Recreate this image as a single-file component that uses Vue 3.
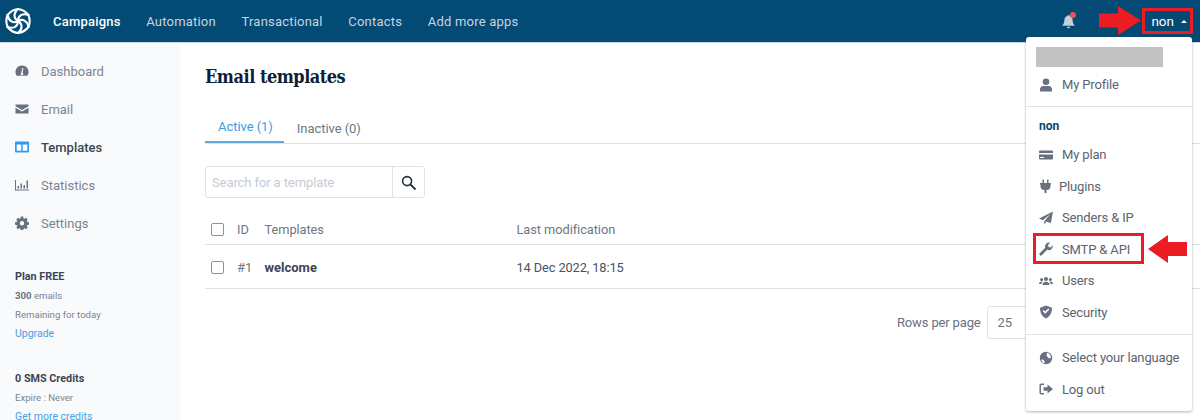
<script setup>
const nav = ['Campaigns', 'Automation', 'Transactional', 'Contacts', 'Add more apps']
const side = [
  { label: 'Dashboard', icon: 'dash' },
  { label: 'Email', icon: 'mail' },
  { label: 'Templates', icon: 'tpl', active: true },
  { label: 'Statistics', icon: 'stat' },
  { label: 'Settings', icon: 'gear' }
]
const petals = [0, 60, 120, 180, 240, 300]
</script>

<template>
  <div class="page">
    <header class="top">
      <svg class="logo" viewBox="0 0 26 28" width="26" height="28">
        <g fill="none" stroke="#fff" stroke-width="2.100" stroke-linecap="round" stroke-linejoin="round">
          <g v-for="p in petals" :key="p" :transform="`rotate(${p} 13 14)`">
            <path d="M13 2 Q19.500 2.800 23.400 8" />
            <path d="M13 14 C8.500 11.500 8 6 13 2" />
          </g>
        </g>
      </svg>
      <nav class="menu">
        <a v-for="(n, i) in nav" :key="n" :class="{ on: i === 0 }">{{ n }}</a>
      </nav>
      <div class="right">
        <span class="bell">
          <svg viewBox="0 0 14 16" width="13" height="15"><path fill="#c3d0da" d="M7 1a1.100 1.100 0 0 1 1.100 1.200C10.300 2.700 11.400 4.400 11.400 6.500c0 3.300 1.100 4.400 1.900 5.300.3.400.1.900-.4.900H1.100c-.5 0-.7-.5-.4-.9.800-.9 1.900-2 1.900-5.300C2.600 4.400 3.700 2.700 5.900 2.200A1.100 1.100 0 0 1 7 1Zm-1.700 12.600h3.400a1.700 1.700 0 0 1-3.400 0Z"/></svg>
          <i class="dot"></i>
        </span>
        <span class="user">non <b class="caret"></b></span>
      </div>
    </header>

    <div class="body">
      <aside class="side">
        <div class="links">
          <div v-for="s in side" :key="s.label" class="link" :class="{ act: s.active }">
            <svg class="ic" viewBox="0 0 14 14" width="14" height="14">
              <path v-if="s.icon === 'dash'" fill="#68727f" fill-rule="evenodd" d="M7 1.500a6.500 6.500 0 0 0-5.600 9.800c.2.300.5.400.8.400h9.600c.3 0 .6-.1.800-.4A6.500 6.500 0 0 0 7 1.500ZM6.300 9l1-5h1L7.700 9a1.200 1.200 0 1 1-1.400 0Z"/>
              <path v-else-if="s.icon === 'mail'" fill="#68727f" d="M.5 2.500h13v1.800L7 8 .5 4.300Zm0 3.300L7 9.500l6.500-3.700v5.700H.500Z"/>
              <path v-else-if="s.icon === 'tpl'" fill="#2d9cf0" fill-rule="evenodd" d="M1 1.500h12a1 1 0 0 1 1 1v9a1 1 0 0 1-1 1H1a1 1 0 0 1-1-1v-9a1 1 0 0 1 1-1Zm.7 3v6.300h4.500V4.500Zm6 0v6.300h4.600V4.500Z"/>
              <path v-else-if="s.icon === 'stat'" fill="#68727f" d="M0 2h1v9.500h13v1H0Zm2.500 6h1.500v2.500H2.500Zm3-2.500H7v5H5.500Zm3 1.500H10v3.500H8.500Zm3-4.500h1.500v8h-1.500Z"/>
              <path v-else fill="#68727f" fill-rule="evenodd" d="M5.800.5h2.400l.3 1.700 1 .5 1.500-.9 1.700 1.700-.9 1.500.5 1 1.700.3v2.400l-1.700.3-.5 1 .9 1.500-1.700 1.700-1.500-.9-1 .5-.3 1.700H5.800l-.3-1.700-1-.5-1.500.9-1.700-1.700.9-1.500-.5-1-1.700-.3V6.300l1.700-.3.500-1-.9-1.500L3 1.800l1.500.9 1-.5ZM7 5a2.200 2.200 0 1 0 0 4.400A2.200 2.200 0 0 0 7 5Z"/>
            </svg>
            <span>{{ s.label }}</span>
          </div>
        </div>
        <div class="info first">
          <strong>Plan FREE</strong>
          <p><b>300</b> emails</p>
          <p>Remaining for today</p>
          <a>Upgrade</a>
        </div>
        <div class="info">
          <strong>0 SMS Credits</strong>
          <p>Expire : Never</p>
          <a>Get more credits</a>
        </div>
      </aside>

      <main class="main">
        <h1>Email templates</h1>
        <div class="tabs">
          <span class="tab on">Active (1)</span>
          <span class="tab">Inactive (0)</span>
        </div>
        <div class="search">
          <span class="ph">Search for a template</span>
          <span class="sbtn">
            <svg viewBox="0 0 16 16" width="15" height="15"><circle cx="6.500" cy="6.500" r="4.800" fill="none" stroke="#27303c" stroke-width="1.700"/><path d="M10 10l4.800 4.800" stroke="#27303c" stroke-width="2.200" stroke-linecap="round"/></svg>
          </span>
        </div>
        <div class="row head">
          <i class="box"></i><span class="id">ID</span><span class="name">Templates</span><span>Last modification</span>
        </div>
        <div class="row body-row">
          <i class="box"></i><span class="id">#1</span><span class="name strong">welcome</span><span class="date">14 Dec 2022, 18:15</span>
        </div>
        <div class="pager">
          <span>Rows per page</span>
          <span class="sel">25</span>
        </div>
      </main>
    </div>

    <div class="drop">
      <div class="sec one">
        <div class="grey"></div>
        <div class="item">
          <svg class="mi" viewBox="0 0 14 14" width="14" height="14"><circle cx="7" cy="3.800" r="3.300" fill="#68727f"/><path fill="#68727f" d="M1 13.500v-2.300C1 9.300 2.500 8 4.200 8h5.600c1.700 0 3.200 1.300 3.200 3.200v2.300Z"/></svg>
          My Profile
        </div>
      </div>
      <div class="sec two">
        <div class="acct">non</div>
        <div class="item">
          <svg class="mi" viewBox="0 0 14 14" width="14" height="14"><path fill="#68727f" fill-rule="evenodd" d="M1 2.500h12a1 1 0 0 1 1 1v7a1 1 0 0 1-1 1H1a1 1 0 0 1-1-1v-7a1 1 0 0 1 1-1ZM0 5v1.500h14V5Zm1 4v1h4V9Z"/></svg>
          My plan
        </div>
        <div class="item tight">
          <svg class="mi small" viewBox="0 0 11 14" width="11" height="14"><path fill="#68727f" d="M2.500.5h1.500v3.500H7V.5h1.500v3.500H11v1.500h-.5V7a4 4 0 0 1-4 4v3H4.500v-3a4 4 0 0 1-4-4V5.500H0V4h2.500Z"/></svg>
          Plugins
        </div>
        <div class="item">
          <svg class="mi" viewBox="0 0 14 14" width="14" height="14"><path fill="#68727f" d="M14 .5 11.800 12.300 7.600 10.500 5.300 13.500V10.300L11.500 3 3.800 9.200 0 7.600Z"/></svg>
          Senders &amp; IP
        </div>
        <div class="item">
          <svg class="mi" viewBox="0 0 14 14" width="14" height="14"><path fill="#68727f" d="M13.700 3.300 11.500 5.500 9.500 5 9 3l2.200-2.200a4 4 0 0 0-5 5L.7 11.200a1.500 1.500 0 0 0 2.100 2.100l5.400-5.500a4 4 0 0 0 5.500-4.500Z"/></svg>
          SMTP &amp; API
        </div>
        <div class="item">
          <svg class="mi" viewBox="0 0 14 14" width="14" height="14"><g fill="#68727f"><circle cx="7" cy="5" r="2.100"/><circle cx="2.600" cy="5.600" r="1.500"/><circle cx="11.400" cy="5.600" r="1.500"/><path d="M3.500 11c0-2 1.500-3.200 3.500-3.200s3.500 1.200 3.500 3.200ZM0 10c0-1.600 1-2.500 2.500-2.500.4 0 .7 0 1 .2A4 4 0 0 0 2.400 10Zm14 0c0-1.600-1-2.500-2.500-2.500-.4 0-.7 0-1 .2a4 4 0 0 1 1.100 2.300Z"/></g></svg>
          Users
        </div>
        <div class="item">
          <svg class="mi" viewBox="0 0 14 14" width="14" height="14"><path fill="#68727f" fill-rule="evenodd" d="M7 .5 13 2.800c0 5.500-2.300 9-6 10.700C3.300 11.800 1 8.300 1 2.800Zm3.300 4L9.200 3.400 6.200 6.500 4.800 5.100 3.700 6.200l2.500 2.500Z"/></svg>
          Security
        </div>
      </div>
      <div class="sec three">
        <div class="item">
          <svg class="mi" viewBox="0 0 14 14" width="14" height="14"><circle cx="7" cy="7" r="6.200" fill="#68727f"/><path fill="#fff" d="M8 1.800c2 .5 3.800 2.300 4 4.500L10.500 7.500 9 6.500 7.500 4.500ZM2.500 8.500l2 .3 1.200 2-.7 1.800c-1.500-.5-2.300-2.400-2.500-4.100Z"/></svg>
          Select your language
        </div>
        <div class="item">
          <svg class="mi" viewBox="0 0 14 14" width="14" height="14"><path fill="none" stroke="#68727f" stroke-width="1.500" d="M5 2.300H2.200a1 1 0 0 0-1 1v7.400a1 1 0 0 0 1 1H5"/><path fill="#68727f" d="M8.500 2.500 14 7l-5.500 4.500V8.800H4.500V5.200h4Z"/></svg>
          Log out
        </div>
      </div>
    </div>

    <i class="mark m-user"></i>
    <i class="mark m-smtp"></i>
    <svg class="arrow a-top" viewBox="0 0 42 29" width="42" height="29"><path fill="#ec1c24" d="M0 7.500H19V0L42 14.500 19 29V21.500H0Z"/></svg>
    <svg class="arrow a-side" viewBox="0 0 39 28" width="39" height="28"><path fill="#ec1c24" d="M39 7H20V0L0 14 20 28V21H39Z"/></svg>
  </div>
</template>

<style>
html, body { margin: 0; background: #fff; }
</style>

<style scoped>
.page {
  position: relative;
  width: 1200px;
  height: 420px;
  overflow: hidden;
  font-family: Roboto, "Liberation Sans", sans-serif;
  color: #68727f;
  background: #fff;
}
.top {
  height: 42px;
  background: #034a75;
  border-bottom: 1px solid #c9d6df;
  display: flex;
  align-items: center;
  padding-left: 5px;
}
.logo { flex: none; }
.menu {
  display: flex;
  gap: 25.700px;
  margin-left: 22px;
  font-size: 13px;
  letter-spacing: .2px;
  color: #c5d5e0;
}
.menu .on { color: #fff; font-weight: 500; }
.right {
  margin-left: auto;
  display: flex;
  align-items: center;
  padding-right: 13px;
}
.bell { position: relative; display: flex; margin-right: 76px; }
.dot {
  position: absolute;
  top: -2px;
  right: -1px;
  width: 6px;
  height: 6px;
  border-radius: 50%;
  background: #ef5350;
}
.user {
  display: flex;
  align-items: center;
  gap: 7px;
  color: #fff;
  font-size: 13.500px;
}
.caret {
  width: 0;
  height: 0;
  border: 3px solid transparent;
  border-top: 0;
  border-bottom-color: #fff;
}
.body {
  display: flex;
  height: 377px;
}
.side {
  width: 180px;
  flex: none;
  background: #f9fafc;
  padding: 9px 0 0 15px;
  box-sizing: border-box;
}
.link {
  height: 38px;
  display: flex;
  align-items: center;
  gap: 12px;
  font-size: 13px;
  color: #7b8490;
}
.link .ic { flex: none; }
.link.act { color: #3d4552; font-weight: 500; }
.info { margin-top: 26px; font-size: 9.600px; line-height: 19px; color: #7b8490; }
.info.first { margin-top: 25px; }
.info strong { display: block; font-size: 10.800px; font-weight: 700; color: #3d4552; }
.info p { margin: 0; }
.info p b { font-weight: 700; color: #68727f; }
.info a { display: block; color: #4a9fe0; font-size: 10.500px; }
.main {
  flex: 1;
  padding: 0 0 0 25px;
  min-width: 0;
}
h1 {
  margin: 0;
  padding-top: 22px;
  height: 28px;
  font: 700 18px/24px "DejaVu Serif", serif;
  font-stretch: condensed;
  letter-spacing: -.5px;
  color: #0f1d35;
}
.tabs {
  margin-top: 8px;
  height: 43px;
  box-sizing: border-box;
  border-bottom: 1px solid #dde3ea;
  display: flex;
  align-items: flex-end;
  font-size: 13px;
}
.tab {
  padding: 0 13px;
  line-height: 28px;
  color: #6e7783;
  height: 28px;
  letter-spacing: -.05px;
}
.tab.on {
  color: #3e9ae4;
  padding-right: 11px;
  border-bottom: 2px solid #5eaadf;
}
.search {
  margin-top: 22px;
  width: 220px;
  height: 32px;
  box-sizing: border-box;
  border: 1px solid #dde3ea;
  border-radius: 3px;
  display: flex;
  align-items: center;
  font-size: 13px;
  letter-spacing: -.1px;
  color: #c5ccd6;
}
.ph { flex: 1; padding-left: 6px; }
.sbtn {
  width: 31px;
  height: 30px;
  border-left: 1px solid #dde3ea;
  display: flex;
  align-items: center;
  justify-content: center;
}
.row {
  display: flex;
  align-items: center;
  height: 44px;
  box-sizing: border-box;
  padding-left: 6px;
  border-bottom: 1px solid #dde3ea;
  font-size: 13px;
  color: #6e7783;
}
.row.head { margin-top: 17px; height: 30px; font-size: 12.800px; letter-spacing: -.05px; }
.body-row { padding-top: 1px; }
.box {
  width: 11px;
  height: 11px;
  border: 1px solid #8a929c;
  border-radius: 2px;
  flex: none;
}
.id { width: 27.500px; margin-left: 13px; flex: none; }
.name { width: 252px; flex: none; }
.strong { font-weight: 700; color: #3d4552; }
.date { color: #4a525e; font-size: 12.800px; letter-spacing: -.1px; }
.pager {
  margin-top: 17px;
  padding-left: 692px;
  display: flex;
  align-items: center;
  gap: 6px;
  font-size: 13px;
  letter-spacing: -.15px;
}
.sel {
  width: 60px;
  height: 33px;
  box-sizing: border-box;
  border: 1px solid #dde3ea;
  border-radius: 3px;
  padding-left: 10px;
  line-height: 31px;
}
.drop {
  position: absolute;
  left: 1026px;
  top: 37px;
  width: 166px;
  height: 374px;
  box-sizing: border-box;
  background: #fff;
  border-radius: 3px;
  box-shadow: 0 1px 3px rgba(60, 70, 85, .4);
  font-size: 13px;
  letter-spacing: -.15px;
  color: #5b6470;
}
.sec { border-bottom: 1px solid #dde3ea; box-sizing: border-box; }
.sec:last-child { border-bottom: 0; }
.one { height: 70px; padding-top: 10px; }
.grey { width: 127px; height: 20px; margin-left: 10px; background: #c2c2c2; }
.item {
  height: 31.500px;
  display: flex;
  align-items: center;
  gap: 9px;
  padding-left: 13px;
}
.one .item { margin-top: 2px; }
.mi { flex: none; }
.tight { gap: 8px; padding-left: 14px; }
.two { height: 228px; padding-top: 12px; }
.acct { font-weight: 700; font-size: 12px; letter-spacing: 0; color: #034a75; padding-left: 13px; height: 15px; line-height: 15px; margin-bottom: 5px; }
.three { padding-top: 7px; }
.mark {
  position: absolute;
  border: 3px solid #ec1c24;
  box-sizing: border-box;
}
.m-user { left: 1142px; top: 8px; width: 51px; height: 26px; }
.m-smtp { left: 1033px; top: 233px; width: 111px; height: 31px; }
.arrow { position: absolute; }
.a-top { left: 1099px; top: 6px; }
.a-side { left: 1148px; top: 235px; }
</style>
